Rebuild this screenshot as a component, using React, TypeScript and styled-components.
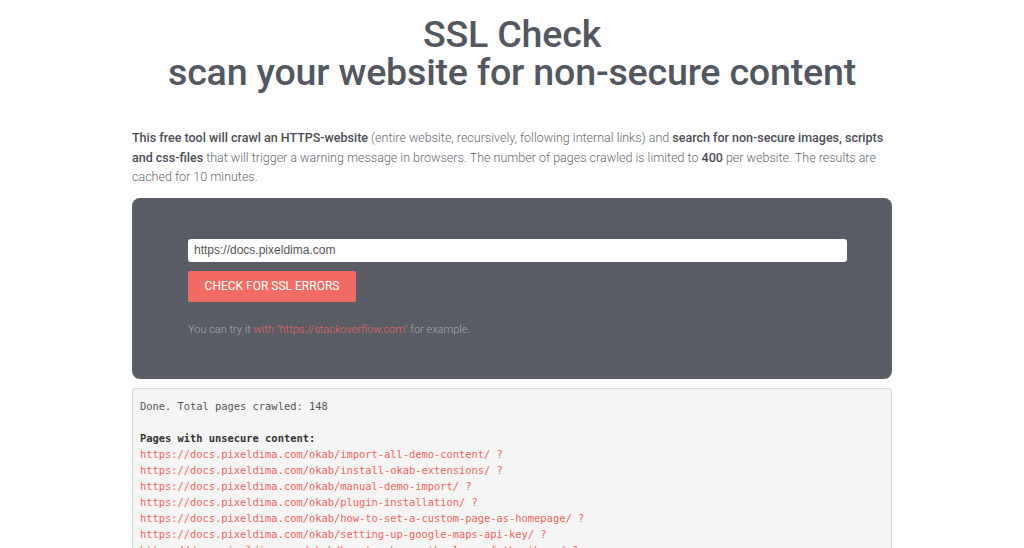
import React from "react";
import styled, { createGlobalStyle } from "styled-components";

const Global = createGlobalStyle`
  html, body { margin: 0; padding: 0; background: #ffffff; }
  body { font-family: Roboto, "Noto Sans", sans-serif; }
  * { box-sizing: border-box; }
`;

const Page = styled.div`
  width: 760px;
  margin: 0 auto;
  padding-top: 16px;
`;

const Title = styled.h1`
  margin: 0;
  text-align: center;
  font-family: Roboto, sans-serif;
  font-weight: 500;
  font-size: 37.6px;
  line-height: 37.5px;
  color: #53575f;
  letter-spacing: -0.2px;
`;

const Intro = styled.p`
  margin: 37px 0 0;
  font-family: Roboto, sans-serif;
  font-size: 12.5px;
  line-height: 19.5px;
  color: #666a70;
  font-weight: 300;
  b { font-weight: 500; color: #4a4d54; }
`;

const Panel = styled.section`
  margin-top: 11px;
  background: #5a5d66;
  border-radius: 8px;
  height: 181px;
  padding: 41px 45px 0 56px;
  display: flex;
  flex-direction: column;
  align-items: flex-start;
`;

const UrlInput = styled.input`
  width: 100%;
  height: 23px;
  border: none;
  border-radius: 3px;
  background: #ffffff;
  padding: 0 6px;
  font-family: "Liberation Sans", Arial, sans-serif;
  font-size: 12px;
  color: #555;
  outline: none;
`;

const CheckButton = styled.button`
  margin-top: 9px;
  width: 168px;
  height: 31px;
  border: none;
  border-radius: 2px;
  background: #f26c65;
  color: #ffffff;
  font-family: Roboto, sans-serif;
  font-weight: 400;
  font-size: 12px;
  letter-spacing: 0px;
  text-transform: uppercase;
  cursor: pointer;
`;

const Hint = styled.p`
  margin: 21px 0 0;
  font-family: Roboto, sans-serif;
  font-weight: 300;
  font-size: 11px;
  color: #a8aab0;
  a { color: #e9655e; text-decoration: none; }
`;

const Results = styled.pre`
  margin: 9px 0 0;
  background: #f5f5f5;
  border: 1px solid #dcdcdc;
  border-bottom: none;
  border-radius: 4px 4px 0 0;
  padding: 9px 7px 0;
  font-family: "DejaVu Sans Mono", monospace;
  font-size: 10.4px;
  line-height: 16px;
  color: #555;
  height: 170px;
  overflow: hidden;
  white-space: pre;
`;

const Strong = styled.b`
  color: #333;
`;

const Link = styled.a`
  color: #f0645d;
  text-decoration: none;
  display: block;
`;

const links = [
  "import-all-demo-content",
  "install-okab-extensions",
  "manual-demo-import",
  "plugin-installation",
  "how-to-set-a-custom-page-as-homepage",
  "setting-up-google-maps-api-key",
  "how-to-change-the-logo-of-the-theme",
];

export default function App() {
  return (
    <>
      <Global />
      <Page>
        <Title>
          SSL Check
          <br />
          scan your website for non-secure content
        </Title>
        <Intro>
          <b>This free tool will crawl an HTTPS-website</b> (entire website, recursively, following internal links) and{" "}
          <b>search for non-secure images, scripts</b>
          <br />
          <b>and css-files</b> that will trigger a warning message in browsers. The number of pages crawled is limited to{" "}
          <b>400</b> per website. The results are
          <br />
          cached for 10 minutes.
        </Intro>
        <Panel>
          <UrlInput defaultValue="https://docs.pixeldima.com" />
          <CheckButton>Check for SSL errors</CheckButton>
          <Hint>
            You can try it <a href="#">with "https://stackoverflow.com"</a> for example.
          </Hint>
        </Panel>
        <Results>
          {"Done. Total pages crawled: 148\n\n"}
          <Strong>Pages with unsecure content:</Strong>
          {"\n"}
          {links.map((l) => (
            <Link key={l} href="#">{`https://docs.pixeldima.com/okab/${l}/ ?`}</Link>
          ))}
        </Results>
      </Page>
    </>
  );
}
